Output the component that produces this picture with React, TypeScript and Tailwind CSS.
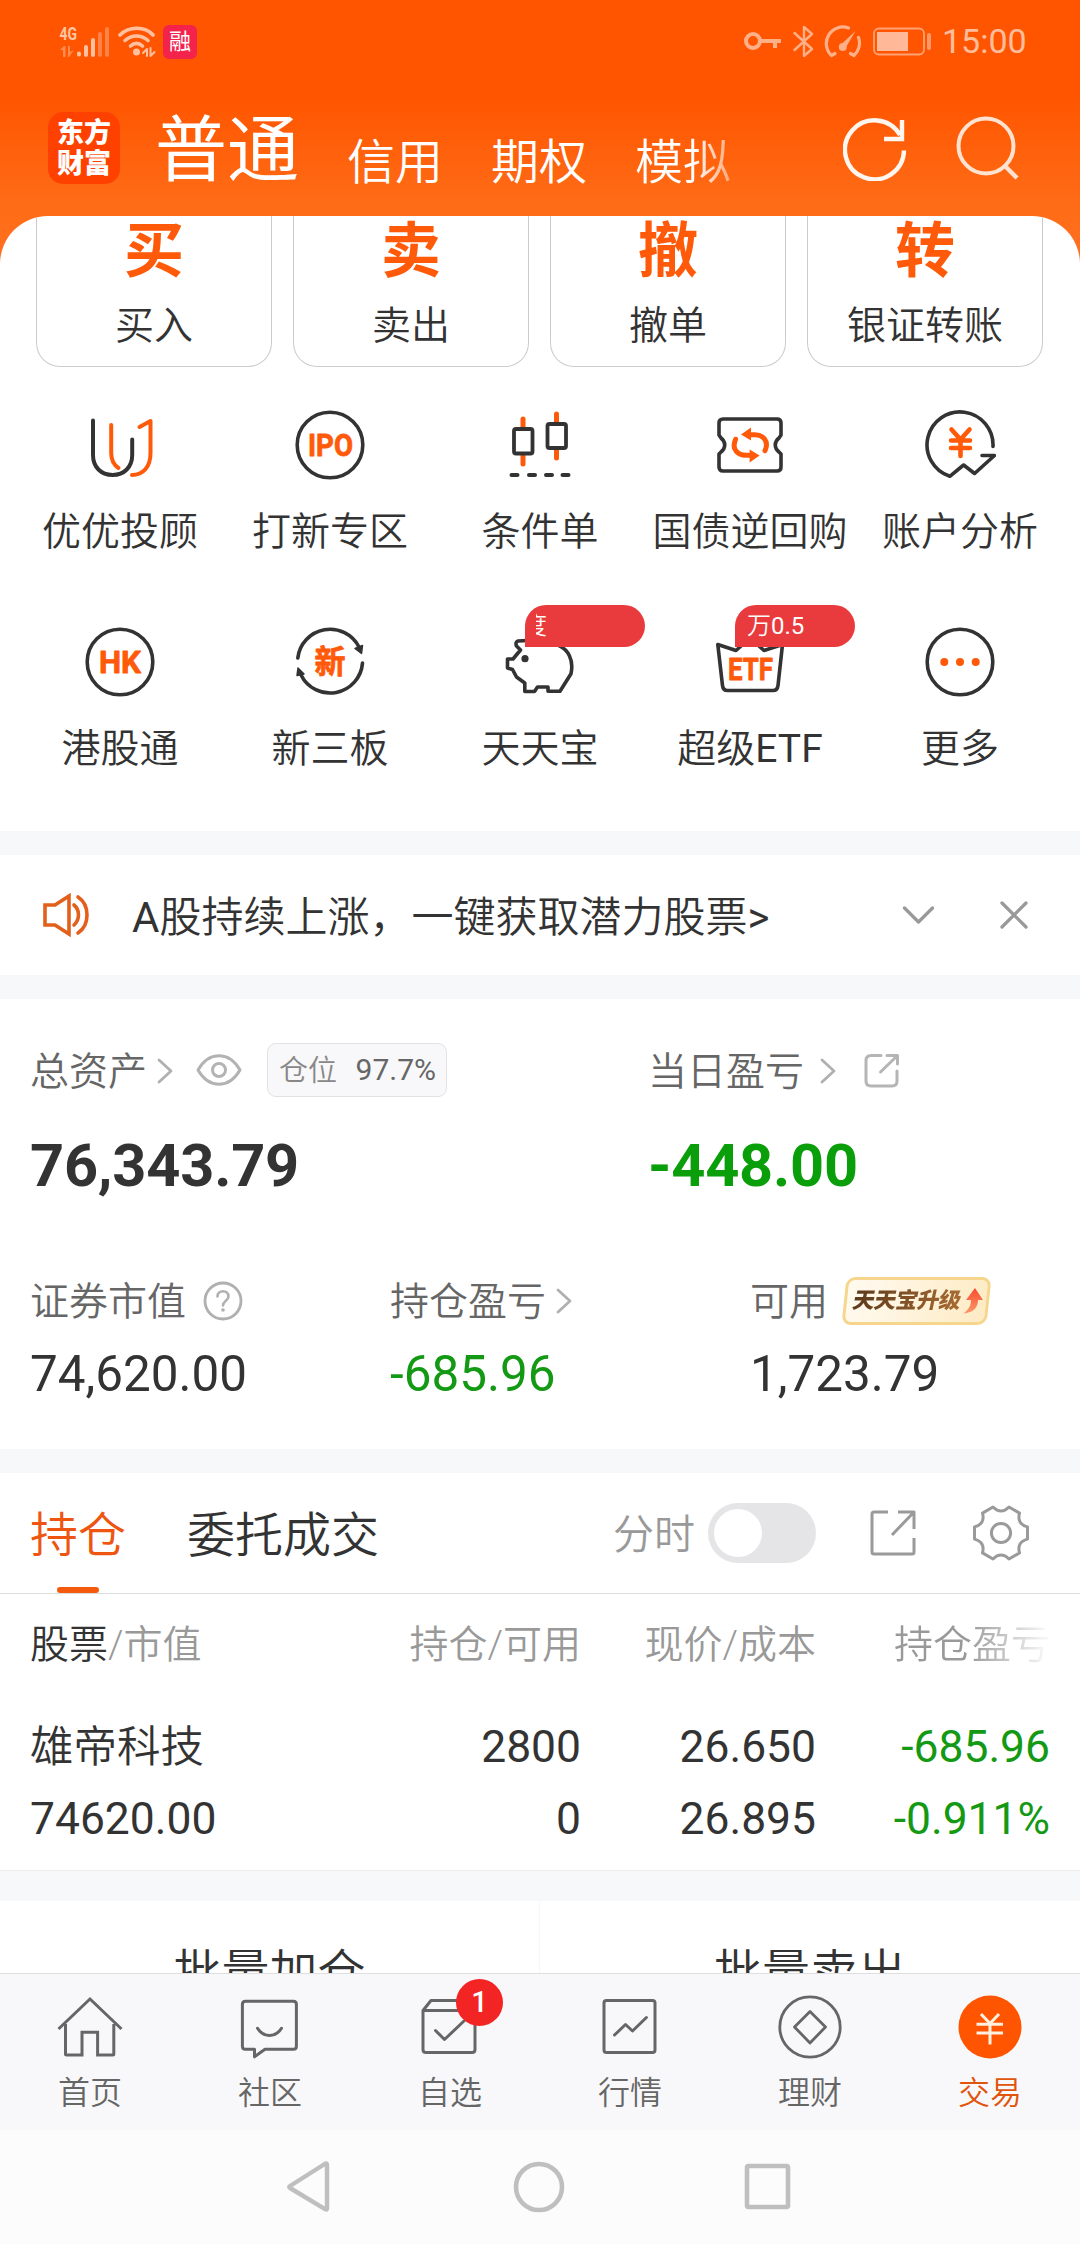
import React from "react";

const DARK = "#333333";
const ORANGE = "#ff5a0a";

function Svg({ w, h, children, className = "" }: { w: number; h: number; children: React.ReactNode; className?: string }) {
  return (
    <svg
      width={w}
      height={h}
      viewBox={`0 0 ${w} ${h}`}
      fill="none"
      strokeLinecap="round"
      strokeLinejoin="round"
      className={"block shrink-0 " + className}
    >
      {children}
    </svg>
  );
}

function IconText({ x, y, size, len, children }: { x: number; y: number; size: number; len: number; children: string }) {
  return (
    <text
      x={x}
      y={y}
      fontSize={size}
      fontWeight={700}
      fill={ORANGE}
      stroke={ORANGE}
      strokeWidth={0.8}
      textLength={len}
      lengthAdjust="spacingAndGlyphs"
      fontFamily="Roboto, 'Noto Sans CJK SC', sans-serif"
    >
      {children}
    </text>
  );
}

/* ---------- Status bar ---------- */
function StatusBar() {
  return (
    <div className="flex h-[84px] shrink-0 items-center pr-[54px] pl-[59px]">
      <Svg w={52} h={36}>
        <text x="0.500" y="16" fontSize="18" fontWeight="700" fill="#ffc6a3" textLength="17.500" lengthAdjust="spacingAndGlyphs" fontFamily="Roboto, sans-serif">4G</text>
        <g fill="#ff8d50">
          <path d="M1 26l4-4h1.500v11H4v-7zM9 22h2v6l4-2-5 7H9z" />
        </g>
        <g strokeWidth="4">
          <path d="M20 29.500v1M27 23v8M34 16v15" stroke="#ffc0a0" />
          <path d="M41 10v21M48 5v26" stroke="#ff8347" />
        </g>
      </Svg>
      <Svg w={38} h={34} className="ml-[7px]">
        <g stroke="#ffc0a0" strokeWidth="3.600">
          <path d="M2 10C11 1 27 1 35 10" />
          <path d="M7 15.500c7-6 16-6 23 0" />
          <path d="M12.500 21c4-3.500 8-3.500 12 0" />
        </g>
        <circle cx="18.500" cy="27" r="3.500" fill="#ffc0a0" />
        <path d="M25 28l4-4v7M32.500 23v8l4-4" stroke="#ffc0a0" strokeWidth="2" />
      </Svg>
      <div className="ml-[7px] flex h-[34px] w-[34px] items-center justify-center rounded-[6px] bg-[#f4234c] text-[22px] leading-none text-white">融</div>
      <div className="flex-1" />
      <Svg w={40} h={34}>
        <circle cx="9" cy="16" r="7" stroke="#ffb088" strokeWidth="4" />
        <path d="M17 16h20M31 16v7" stroke="#ffb088" strokeWidth="4" strokeLinecap="butt" />
      </Svg>
      <Svg w={22} h={34} className="ml-[9px]">
        <path d="M1.500 8L19 24l-8 7V2l8 7L1.500 25" stroke="#ffb088" strokeWidth="2.400" />
      </Svg>
      <Svg w={38} h={34} className="ml-[9px]">
        <path d="M7.500 30.500A16.500 16.500 0 0 1 24.500 3M34.500 12.500A16.500 16.500 0 0 1 30 30.500M7.500 30.500l3.500-2M30 30.500l-3.500-2" stroke="#ffb088" strokeWidth="3.200" />
        <path d="M31.500 6L16.500 20l5 3z" fill="#ffb088" />
        <circle cx="18.800" cy="22" r="4" fill="#ffb088" />
      </Svg>
      <Svg w={60} h={34} className="ml-[11px]">
        <rect x="1" y="3.500" width="50" height="26" rx="5" stroke="#ffa273" strokeWidth="1.800" />
        <rect x="4" y="7" width="31" height="19" fill="#ffb998" />
        <path d="M56 10v13" stroke="#ff9a68" strokeWidth="4" />
      </Svg>
      <div className="mt-[-2px] ml-[9px] w-[84px] text-[34px] leading-none whitespace-nowrap text-[#ffbd9c]">15:00</div>
    </div>
  );
}

/* ---------- Header ---------- */
function Header() {
  return (
    <div className="flex h-[132px] shrink-0 pl-[48px] pr-[58px]">
      <div className="mt-[28px] flex h-[72px] w-[72px] flex-col items-center justify-center rounded-[15px] bg-[#ff4100] pt-px text-[27px] leading-[31px] font-black text-white">
        <span>东方</span>
        <span>财富</span>
      </div>
      <div className="ml-[35px] mt-[29px] w-[144px] text-[72px] leading-[76px] text-white">普通</div>
      <div className="ml-[48px] mt-[53px] flex w-[401px] gap-[48px] text-[48px] leading-[52px] font-[350] whitespace-nowrap text-white">
        <span>信用</span>
        <span>期权</span>
        <span className="bg-[linear-gradient(90deg,#ffffff_60%,#ffa877_100%)] bg-clip-text text-transparent">模拟</span>
      </div>
      <div className="flex-1" />
      <Svg w={64} h={64} className="mt-[33px]">
        <path d="M61 33.500A29.500 29.500 0 1 1 57 18" stroke="#fff6ef" strokeWidth="4.400" strokeLinecap="butt" />
        <path d="M59 3v19H41" stroke="#fff6ef" strokeWidth="4.400" strokeLinecap="butt" strokeLinejoin="miter" />
      </Svg>
      <Svg w={66} h={66} className="ml-[49px] mt-[32px]">
        <circle cx="30" cy="30" r="27.500" stroke="#ffe3d0" strokeWidth="4" />
        <path d="M48 49l13 13" stroke="#ffe3d0" strokeWidth="4.400" strokeLinecap="butt" />
      </Svg>
    </div>
  );
}

/* ---------- Trade cards ---------- */
const trades = [
  ["买", "买入"],
  ["卖", "卖出"],
  ["撤", "撤单"],
  ["转", "银证转账"],
];

function TradeCards() {
  return (
    <div className="flex h-[151px] gap-[21px] pr-[37px] pl-[36px]">
      {trades.map(([big, label]) => (
        <div key={label} className="flex flex-1 flex-col items-center rounded-b-[24px] border border-t-0 border-[#cccccc]">
          <div className="mt-[4px] h-[64px] text-[60px] leading-[64px] font-bold text-[#ff5a0a]">{big}</div>
          <div className="mt-[20px] h-[44px] text-[39px] leading-[44px] font-[350] text-[#333]">{label}</div>
        </div>
      ))}
    </div>
  );
}

/* ---------- Feature grid ---------- */
const Circle = () => <circle cx="36" cy="36" r="32.800" stroke={DARK} strokeWidth="3.600" />;

const features: { label: string; latin?: string; icon: React.ReactNode; badge?: React.ReactNode }[] = [
  {
    label: "优优投顾",
    icon: (
      <g strokeWidth="4">
        <path d="M9 11.500V46c0 12 8 20 19.600 20s19.600-8 19.600-20V30.500" stroke={DARK} />
        <path d="M27.200 16v28c0 7 2.800 12 7.300 15" stroke={ORANGE} />
        <path d="M55.500 18l11-6v32c0 14-7.500 22-18.500 22" stroke={ORANGE} />
      </g>
    ),
  },
  {
    label: "打新专区",
    icon: (
      <>
        <Circle />
        <IconText x={14} y={47} size={32} len={45}>IPO</IconText>
      </>
    ),
  },
  {
    label: "条件单",
    icon: (
      <>
        <path d="M19 10v8M19 46v9M52.500 5v8M52.500 41v8" stroke={ORANGE} strokeWidth="5" />
        <rect x="10" y="20" width="18.500" height="24.500" rx="2" stroke={DARK} strokeWidth="3.800" />
        <rect x="43.500" y="15" width="18.500" height="24" rx="2" stroke={DARK} strokeWidth="3.800" />
        <path d="M7.500 66h6M25 66h6M42 66h6M58.500 66h6" stroke={DARK} strokeWidth="4" />
      </>
    ),
  },
  {
    label: "国债逆回购",
    icon: (
      <>
        <path d="M5 26V14q0-4 4-4h54q4 0 4 4v12l-2 3c-5 4-5 10 0 14l2 2v13q0 4-4 4H9q-4 0-4-4V45l2-2c5-4 5-10 0-14z" stroke={DARK} strokeWidth="3.600" />
        <g>
          <path d="M35 25.800h6c8 0 13 6 11 13l-1 3" stroke={ORANGE} strokeWidth="5" />
          <path d="M27 25.500l10-7v13z" fill={ORANGE} />
        </g>
        <g transform="rotate(180 36.300 36)">
          <path d="M35 25.800h6c8 0 13 6 11 13l-1 3" stroke={ORANGE} strokeWidth="5" />
          <path d="M27 25.500l10-7v13z" fill={ORANGE} />
        </g>
      </>
    ),
  },
  {
    label: "账户分析",
    icon: (
      <>
        <path d="M69 37.500A33 33 0 1 0 25.800 67.300L39.600 56l11 8.500L70.500 46.500H58" stroke={DARK} strokeWidth="3.600" />
        <path d="M27.500 20.500l9 10 9-10M27 31.500h19M27 39h19M36.500 31v16" stroke={ORANGE} strokeWidth="4.600" />
      </>
    ),
  },
  {
    label: "港股通",
    icon: (
      <>
        <Circle />
        <IconText x={15} y={47} size={32} len={42}>HK</IconText>
      </>
    ),
  },
  {
    label: "新三板",
    icon: (
      <>
        <path d="M3.800 32A32.500 32.500 0 0 1 65 21" stroke={DARK} strokeWidth="3.600" />
        <path d="M68.500 37A32.500 32.500 0 0 1 7 49" stroke={DARK} strokeWidth="3.600" />
        <path d="M61 22.500l7.500-3-1 8z" fill={DARK} stroke={DARK} strokeWidth="1.500" />
        <path d="M3 49.500l7-1.500-6-6z" fill={DARK} stroke={DARK} strokeWidth="1.500" />
        <IconText x={20.500} y={47} size={32} len={31}>新</IconText>
      </>
    ),
  },
  {
    label: "天天宝",
    icon: (
      <>
        <path
          d="M24 14.500l-10 .5q-3 1-1.500 5l4 4-7.500 9H3.500v9l5 1.500 4 7.500 8.300 6v8.500h9.700l3-4.500h10.500v4.200h12l11-17.500c3-14-3-24-12-28q-10-6-22-2.500"
          stroke={DARK}
          strokeWidth="3.600"
        />
        <circle cx="21" cy="32.700" r="3.600" fill={DARK} />
      </>
    ),
    badge: (
      <span className="ml-[11px] flex h-[28px] w-[11px] justify-end overflow-hidden">
        <span className="shrink-0">度</span>
      </span>
    ),
  },
  {
    label: "超级",
    latin: "ETF",
    icon: (
      <>
        <path d="M3.800 18.500L22 24.500 36 12l14 12.500 18.500-6-4.500 41q-.6 5-5 5H13.500q-4.400 0-5-5z" stroke={DARK} strokeWidth="3.600" />
        <IconText x={14} y={53.500} size={31} len={45}>ETF</IconText>
      </>
    ),
    badge: <span className="ml-[12px] font-[350]">万<span className="font-normal">0.5</span></span>,
  },
  {
    label: "更多",
    icon: (
      <>
        <Circle />
        <g fill={ORANGE}>
          <circle cx="20.300" cy="36" r="4" />
          <circle cx="36" cy="36" r="4" />
          <circle cx="51.700" cy="36" r="4" />
        </g>
      </>
    ),
  },
];

function FeatureGrid() {
  return (
    <div className="grid h-[464px] grid-cols-5 content-start px-[15px] pt-[42px]">
      {features.map((f) => (
        <div key={f.label} className="relative flex h-[217px] flex-col items-center">
          <Svg w={72} h={72}>{f.icon}</Svg>
          <div className="mt-[29px] h-[44px] text-[39px] leading-[44px] font-[350] whitespace-nowrap text-[#333]">
            {f.label}
            {f.latin && <span className="font-normal">{f.latin}</span>}
          </div>
          {f.badge && (
            <div className="absolute top-[-21px] left-[90px] flex h-[42px] w-[120px] items-center rounded-[21px] rounded-bl-none bg-[#e93b3d] text-[24px] leading-[28px] font-[350] text-white">
              {f.badge}
            </div>
          )}
        </div>
      ))}
    </div>
  );
}

const Gap = () => <div className="h-[24px] shrink-0 bg-[#f7f8fa]" />;

/* ---------- Notice ---------- */
function Notice() {
  return (
    <div className="flex h-[120px] items-center pl-[42px]">
      <Svg w={48} h={44}>
        <g stroke="#e2601c" strokeWidth="3.600">
          <path d="M3 12h10L27 3v38L13 32H3z" strokeLinejoin="miter" />
          <path d="M32 12c6 5 6 14 0 20M36 4c12 8 12 28 0 36" />
        </g>
      </Svg>
      <div className="mt-[5px] ml-[42px] h-[48px] w-[741px] text-[42px] leading-[48px] whitespace-nowrap text-[#333]">
        A<span className="font-[350]">股持续上涨，一键获取潜力股票</span>&gt;
      </div>
      <Svg w={32} h={20} className="ml-[29px]">
        <path d="M2.500 3l14 14 14-14" stroke="#999" strokeWidth="3.300" />
      </Svg>
      <Svg w={28} h={28} className="ml-[66px]">
        <path d="M2 2l24 24M26 2L2 26" stroke="#999" strokeWidth="3.300" />
      </Svg>
    </div>
  );
}

/* ---------- Assets ---------- */
const Chevron = ({ className = "" }: { className?: string }) => (
  <Svg w={16} h={28} className={className}>
    <path d="M2 3l12 11L2 25" stroke="#b0b0b0" strokeWidth="2.800" />
  </Svg>
);

function UpgradeBadge() {
  return (
    <div className="relative ml-[13px] flex h-[48px] w-[151px] items-center">
      <div className="absolute inset-x-[3px] inset-y-0 -skew-x-6 rounded-[9px] border-[3px] border-[#f5d68c] bg-[linear-gradient(100deg,#fffaf0,#fdebc4)]" />
      <div className="relative ml-[12px] -skew-x-12 bg-[linear-gradient(90deg,#5c3a1c,#a86a32)] bg-clip-text text-[22px] leading-[28px] font-black tracking-[-0.500px] whitespace-nowrap text-transparent">
        天天宝升级
      </div>
      <Svg w={20} h={28} className="relative ml-[2px]">
        <path d="M12 1l8 12h-5c0 8-5 12.500-14.500 13.500C6 22 8 19 8 13H3z" fill="url(#up)" />
        <defs>
          <linearGradient id="up" x1="0" y1="0" x2="0" y2="1">
            <stop offset="0" stopColor="#f84a30" />
            <stop offset="1" stopColor="#fb9a6a" />
          </linearGradient>
        </defs>
      </Svg>
    </div>
  );
}

function Assets() {
  return (
    <div className="flex h-[450px] flex-col pl-[30px] text-[#333]">
      <div className="mt-[43px] flex h-[56px]">
        <div className="flex w-[618px] items-center">
          <span className="mt-[3px] w-[117px] text-[39px] leading-[44px] font-[350] text-[#666]">总资产</span>
          <Chevron className="mt-[2px] ml-[10px]" />
          <Svg w={46} h={34} className="ml-[23px]">
            <path d="M2 17C13-2 33-2 44 17 33 36 13 36 2 17z" stroke="#b3b3b3" strokeWidth="3" />
            <circle cx="23" cy="17" r="6.500" stroke="#b3b3b3" strokeWidth="3" />
          </Svg>
          <div className="ml-[25px] flex h-[54px] w-[180px] items-center justify-between rounded-[9px] border border-[#e2e2e4] bg-[#f8f8fa] pr-[10px] pl-[11px] leading-[34px]">
            <span className="pt-[2px] text-[29px] font-[350] text-[#888]">仓位</span>
            <span className="text-[30px] text-[#666]">97.7%</span>
          </div>
        </div>
        <div className="flex items-center">
          <span className="mt-[3px] text-[39px] leading-[44px] font-[350] text-[#666]">当日盈亏</span>
          <Chevron className="mt-[2px] ml-[16px]" />
          <Svg w={36} h={36} className="mt-px ml-[28px]">
            <path d="M17 2.500H7q-5 0-5 5V28q0 5 5 5h21q5 0 5-5V18M23 2.500h10.500V11M33 3L16.500 19" stroke="#b5b5b5" strokeWidth="3" />
          </Svg>
        </div>
      </div>
      <div className="mt-[33px] flex h-[70px] text-[59.500px] leading-[70px] font-bold">
        <div className="w-[618px] tracking-[-0.200px]">76,343.79</div>
        <div className="tracking-[-0.200px] text-[#0a9e0a]">-448.00</div>
      </div>
      <div className="mt-[74px] flex h-[52px] text-[39px] leading-[44px] font-[350] text-[#666]">
        <div className="flex w-[360px] items-center">
          <span className="mt-[2px]">证券市值</span>
          <Svg w={40} h={40} className="ml-[17px]">
            <circle cx="20" cy="20" r="18" stroke="#b0b0b0" strokeWidth="2.800" />
            <path d="M14.500 15.500c0-7 11-7 11 0 0 4-5.500 4.500-5.500 9" stroke="#b0b0b0" strokeWidth="2.600" />
            <circle cx="20" cy="29" r="1.800" fill="#b0b0b0" />
          </Svg>
        </div>
        <div className="flex w-[360px] items-center">
          <span className="mt-[2px]">持仓盈亏</span>
          <Chevron className="ml-[10px]" />
        </div>
        <div className="flex items-center">
          <span className="mt-[2px]">可用</span>
          <UpgradeBadge />
        </div>
      </div>
      <div className="mt-[19px] flex h-[56px] text-[49.400px] leading-[56px]">
        <div className="w-[360px]">74,620.00</div>
        <div className="w-[360px] text-[#149914]">-685.96</div>
        <div>1,723.79</div>
      </div>
    </div>
  );
}

/* ---------- Holdings ---------- */
function HoldingTabs() {
  return (
    <div className="flex h-[121px] items-center border-b border-[#dddddd] pr-[51px] pl-[30px]">
      <div className="relative flex h-full w-[96px] items-center pt-[5px] text-[48px] leading-[52px] font-[350] text-[#ee5510]">
        持仓
        <span className="absolute bottom-0 left-[27px] h-[6px] w-[42px] rounded-[3px] bg-[#f55a0c]" />
      </div>
      <div className="mt-[5px] ml-[61px] text-[48px] leading-[52px] font-[350] text-[#333]">委托成交</div>
      <div className="flex-1" />
      <div className="mt-[4px] text-[41px] leading-[46px] font-[350] text-[#999]">分时</div>
      <div className="ml-[13px] flex h-[60px] w-[108px] items-center rounded-full bg-[#e5e5e7] pl-[6px]">
        <div className="h-[48px] w-[48px] rounded-full bg-white" />
      </div>
      <Svg w={48} h={48} className="ml-[53px]">
        <path d="M19 3H5q-2 0-2 2v38q0 2 2 2h38q2 0 2-2V29M29 3h16v17M44 4L23 26" stroke="#9a9a9a" strokeWidth="3" strokeLinecap="butt" />
      </Svg>
      <Svg w={56} h={56} className="ml-[56px]">
        <path
          d="M54.500 34.100Q43.600 37 46.500 47.900L36 54Q28 46 20 54L9.500 47.900Q12.400 37 1.500 34.100V21.900Q12.400 19 9.500 8.100L20 2Q28 10 36 2L46.500 8.100Q43.600 19 54.500 21.900Z"
          stroke="#9a9a9a"
          strokeWidth="3"
        />
        <circle cx="28" cy="28" r="9.600" stroke="#9a9a9a" strokeWidth="3" />
      </Svg>
    </div>
  );
}

const columns = "grid grid-cols-[300px_251px_235px_234px] pl-[30px] text-right";

function Holdings() {
  return (
    <div className="h-[277px] border-b border-[#ececee] text-[#333]">
      <div className={columns + " h-[100px] items-center pt-[2px] text-[39px] leading-[44px] font-[350] text-[#999]"}>
        <div className="text-left">
          <span className="text-[#333]">股票</span>/市值
        </div>
        <div>持仓/可用</div>
        <div>现价/成本</div>
        <div className="bg-[linear-gradient(90deg,#999999_65%,#f4f4f4_97%)] bg-clip-text text-transparent">持仓盈亏</div>
      </div>
      <div className={columns + " mt-[17px] h-[72px] items-center text-[44.400px] leading-[52px]"}>
        <div className="pt-[2px] text-left text-[43.500px] font-[350]">雄帝科技</div>
        <div>2800</div>
        <div>26.650</div>
        <div className="text-[#149914]">-685.96</div>
      </div>
      <div className={columns + " h-[72px] items-center text-[44.400px] leading-[52px]"}>
        <div className="text-left">74620.00</div>
        <div>0</div>
        <div>26.895</div>
        <div className="text-[#149914]">-0.911%</div>
      </div>
    </div>
  );
}

/* ---------- Bottom navigation ---------- */
const GREY = "#666666";
const tabs = [
  { label: "首页", icon: <path d="M4.500 38L36 8l31.500 30M11.500 33v30q0 1 1 1H28V41.300h15.600V64h15.200q1 0 1-1V33" stroke={GREY} strokeWidth="3" strokeLinejoin="miter" strokeLinecap="butt" /> },
  {
    label: "社区",
    icon: <path d="M11.400 10.300h48q3 0 3 3v42q0 3-3 3H31l-10.500 7.500v-7.500h-9.100q-3 0-3-3v-42q0-3 3-3zM23.500 37.300c6 9.500 18 9.500 24 0" stroke={GREY} strokeWidth="3" />,
  },
  {
    label: "自选",
    icon: <path d="M9 19.500l8-10h37l7 10v39q0 3-3 3H12q-3 0-3-3zM9 19.500h52M21.500 39.500l9 9L50 30" stroke={GREY} strokeWidth="3" />,
    badge: "1",
  },
  {
    label: "行情",
    icon: (
      <g stroke={GREY} strokeWidth="3">
        <rect x="10" y="9.500" width="51" height="52" rx="2.500" />
        <path d="M20.500 44l11-10.500 7 6.500L52.400 26.500" />
      </g>
    ),
  },
  {
    label: "理财",
    icon: (
      <g stroke={GREY} strokeWidth="2.800">
        <circle cx="36" cy="36" r="30.200" />
        <path d="M36 20.500L51.500 36 36 52 20.500 36z" />
      </g>
    ),
  },
  {
    label: "交易",
    icon: (
      <>
        <circle cx="36" cy="36" r="31.500" fill="#ff5500" />
        <path d="M27 23l9 9.500L45 23M22.500 33.200h26.500M22.500 42h26.500M36 32v21.500" stroke="#fff0e0" strokeWidth="3" strokeLinecap="butt" />
      </>
    ),
    active: true,
  },
];

function TabBar() {
  return (
    <div className="grid h-[157px] shrink-0 grid-cols-6 border-t border-[#dfdfdf] bg-[#f8f8fa]">
      {tabs.map((t) => (
        <div key={t.label} className="relative flex flex-col items-center pt-[17px]">
          <Svg w={72} h={72}>{t.icon}</Svg>
          <div className={"mt-[12px] text-[32px] leading-[36px] font-[350] " + (t.active ? "text-[#e0540c]" : "text-[#666]")}>{t.label}</div>
          {t.badge && (
            <div className="absolute top-[5px] left-[96px] flex h-[47px] w-[47px] items-center justify-center rounded-full bg-[#f22424] text-[29px] font-medium text-white">
              {t.badge}
            </div>
          )}
        </div>
      ))}
    </div>
  );
}

function SystemBar() {
  return (
    <div className="flex h-[114px] shrink-0 items-center justify-center bg-[#fcfcfc]">
      <Svg w={46} h={54}>
        <path d="M41 4.500v44q0 1.500-1.500.8L4 28q-1.500-1 0-2L39.500 3.500q1.500-.5 1.500 1z" stroke="#bfbfbf" strokeWidth="4.400" />
      </Svg>
      <Svg w={52} h={52} className="ml-[181px]">
        <circle cx="26" cy="26" r="23" stroke="#bfbfbf" strokeWidth="4.600" />
      </Svg>
      <Svg w={48} h={48} className="mr-[2px] ml-[179px]">
        <rect x="3" y="3" width="41" height="41" rx="1.500" stroke="#bfbfbf" strokeWidth="4.600" />
      </Svg>
    </div>
  );
}

export default function App() {
  return (
    <div
      lang="zh-CN"
      className="flex h-[2244px] w-[1080px] flex-col overflow-hidden bg-[linear-gradient(180deg,#ff5500_96px,#ff6c17_205px,#ff7020_264px)] font-[Roboto,'Noto_Sans_CJK_SC',sans-serif]"
    >
      <StatusBar />
      <Header />
      <main className="h-[1757px] shrink-0 overflow-hidden rounded-t-[48px] bg-white">
        <TradeCards />
        <FeatureGrid />
        <Gap />
        <Notice />
        <Gap />
        <Assets />
        <Gap />
        <HoldingTabs />
        <Holdings />
        <div className="h-[30px] bg-[#f7f8fa]" />
        <div className="grid h-[144px] grid-cols-2 text-center text-[48px] leading-[143px] font-[350] text-[#333]">
          <div className="border-r border-[#f7f7f7]">批量加仓</div>
          <div>批量卖出</div>
        </div>
      </main>
      <TabBar />
      <SystemBar />
    </div>
  );
}
